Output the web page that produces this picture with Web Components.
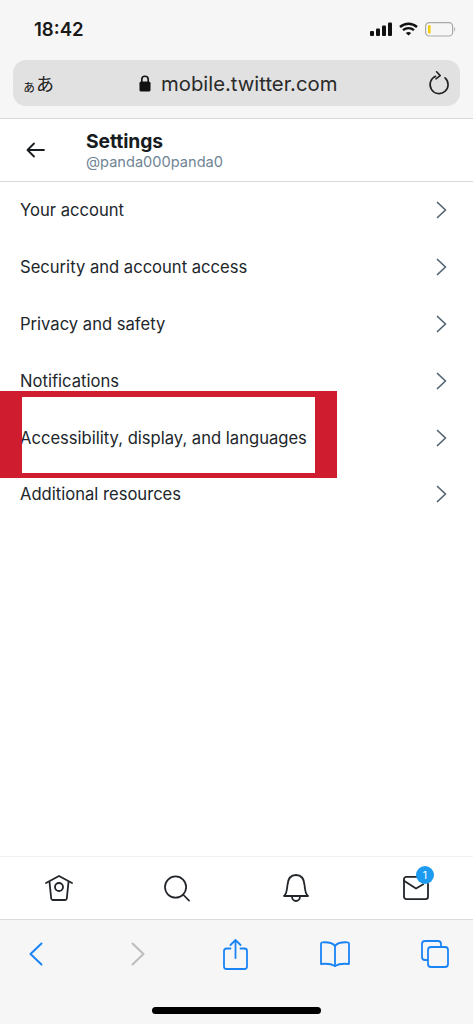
<!DOCTYPE html>
<html>
<head>
<meta charset="utf-8">
<title>Settings</title>
<style>
  html, body { margin: 0; padding: 0; background: #fff; }
  body { font-family: Inter, "Noto Sans CJK JP", sans-serif; }
  #page { width: 473px; height: 1024px; display: flex; flex-direction: column; overflow: hidden; }
  #list { flex: 1; }
</style>
</head>
<body>
<div id="page">
  <browser-top url="mobile.twitter.com"></browser-top>
  <settings-header title="Settings" handle="@panda000panda0"></settings-header>
  <div id="list">
    <settings-row>Your account</settings-row>
    <settings-row>Security and account access</settings-row>
    <settings-row>Privacy and safety</settings-row>
    <settings-row>Notifications</settings-row>
    <settings-row marked>Accessibility, display, and languages</settings-row>
    <settings-row>Additional resources</settings-row>
  </div>
  <tab-bar></tab-bar>
  <browser-bottom></browser-bottom>
</div>

<script>
/* BARRA DO NAVEGADOR */
class BrowserTop extends HTMLElement {
  connectedCallback() {
    this.attachShadow({ mode: "open" });
    this.shadowRoot.innerHTML = `
      <style>
        :host { display: block; height: 118px; background: #f6f6f6; border-bottom: 1px solid #d9d9d9; }
        .status { height: 60px; display: flex; align-items: center; justify-content: space-between; padding: 0 17px 2px 34px; box-sizing: border-box; }
        .time { font-size: 18.6px; font-weight: 600; color: #1a1a1a; }
        .icons { display: flex; align-items: center; gap: 7px; }
        svg { display: block; }
        .url { margin: 0 13px; height: 46px; border-radius: 13px; background: #e1e1e1; display: flex; align-items: center; padding: 0 11px 0 9px; }
        .aa { font-size: 18px; color: #222; font-family: "Noto Sans CJK JP", sans-serif; width: 117px; white-space: nowrap; }
        .aa small { font-size: 14px; }
        .addr { flex: 1; display: flex; align-items: center; gap: 10px; font-size: 20.3px; color: #2a2a2a; }
      </style>
      <div class="status">
        <span class="time">18:42</span>
        <span class="icons">
          <svg width="22" height="14" viewBox="0 0 22 14" fill="#111">
            <rect x="0" y="9" width="4" height="5" rx="1"/><rect x="6" y="6.5" width="4" height="7.5" rx="1"/>
            <rect x="12" y="3.5" width="4" height="10.5" rx="1"/><rect x="18" y="0.5" width="4" height="13.5" rx="1"/>
          </svg>
          <svg width="19" height="14" viewBox="0 0 19 14" fill="none" stroke="#111" stroke-width="2.4">
            <path d="M1 5 C6 0.6 13 0.6 18 5"/><path d="M4 8.2 C7.2 5.4 11.8 5.4 15 8.2"/>
            <path d="M9.5 13.6 L6.8 10.9 C8.4 9.7 10.6 9.7 12.2 10.9 Z" fill="#111" stroke="none"/>
          </svg>
          <svg width="31" height="15" viewBox="0 0 31 15">
            <rect x="0.6" y="0.6" width="27" height="13.4" rx="3.6" fill="none" stroke="#a9a9a9" stroke-width="1.2"/>
            <rect x="3" y="3" width="2.6" height="8.6" rx="1" fill="#f6ce0e"/>
            <path d="M29.2 5 C30.4 5.5 30.4 9.1 29.2 9.6 Z" fill="#a9a9a9"/>
          </svg>
        </span>
      </div>
      <div class="url">
        <span class="aa"><small>ぁ</small>あ</span>
        <span class="addr">
          <svg width="12" height="17" viewBox="0 0 12 17"><path d="M2.8 7V4.4a3.2 3.2 0 0 1 6.4 0V7" fill="none" stroke="#111" stroke-width="1.6"/><rect x="0.5" y="6.6" width="11" height="10" rx="1.6" fill="#111"/></svg>
          <span>${this.getAttribute("url")}</span>
        </span>
        <svg width="21" height="24" viewBox="0 0 21 24" fill="none" stroke="#222" stroke-width="1.6" stroke-linecap="round" stroke-linejoin="round">
          <path d="M7.6 5.3 A9 9 0 1 0 17 6.8"/><path d="M8.6 0.8 L12.2 4.6 L8 7.8"/>
        </svg>
      </div>`;
  }
}
customElements.define("browser-top", BrowserTop);

/* CABECALHO */
class SettingsHeader extends HTMLElement {
  connectedCallback() {
    this.attachShadow({ mode: "open" });
    this.shadowRoot.innerHTML = `
      <style>
        :host { display: flex; align-items: center; height: 62px; background: #fff; border-bottom: 1px solid #d5dadd; }
        .back { width: 86px; padding-left: 26px; box-sizing: border-box; }
        svg { display: block; }
        .title { font-size: 19.3px; font-weight: 700; color: #171c21; line-height: 24px; letter-spacing: -0.1px; }
        .handle { font-size: 14.6px; color: #6f8494; line-height: 19px; }
      </style>
      <div class="back">
        <svg width="19" height="16" viewBox="0 0 19 16" fill="none" stroke="#171c21" stroke-width="1.8" stroke-linecap="round" stroke-linejoin="round">
          <path d="M18 8H1.500M8 1.500L1.500 8L8 14.500"/>
        </svg>
      </div>
      <div>
        <div class="title">${this.getAttribute("title")}</div>
        <div class="handle">${this.getAttribute("handle")}</div>
      </div>`;
  }
}
customElements.define("settings-header", SettingsHeader);

/* LINHAS */
class SettingsRow extends HTMLElement {
  connectedCallback() {
    this.attachShadow({ mode: "open" });
    const mark = this.hasAttribute("marked") ? `<div class="mark"></div>` : "";
    this.shadowRoot.innerHTML = `
      <style>
        :host { display: flex; align-items: center; justify-content: space-between; height: 56.8px; padding: 0 26px 0 20px; font-size: 16.6px; color: #22272c; position: relative; }
        svg { display: block; }
        .mark { position: absolute; left: 0; top: -18px; width: 337px; height: 87px; box-sizing: border-box; border: solid #d01c2f; border-width: 6px 22px 5px 22.5px; }
      </style>
      <span><slot></slot></span>
      <svg width="11" height="18" viewBox="0 0 11 18" fill="none" stroke="#536471" stroke-width="1.7" stroke-linecap="round" stroke-linejoin="round">
        <path d="M1.500 1.500L9.500 9L1.500 16.500"/>
      </svg>
      ${mark}`;
  }
}
customElements.define("settings-row", SettingsRow);

/* ABAS */
class TabBar extends HTMLElement {
  connectedCallback() {
    this.attachShadow({ mode: "open" });
    this.shadowRoot.innerHTML = `
      <style>
        :host { display: flex; align-items: center; justify-content: space-between; height: 62px; padding: 0 44px 0 45px; background: #fff; border-top: 1px solid #f1f1f1; border-bottom: 1px solid #dcdcdc; }
        svg { display: block; overflow: visible; }
        .tab { position: relative; }
        .search { margin-left: -3px; }
        .badge { position: absolute; top: -10px; right: -5px; width: 18px; height: 18px; border-radius: 50%; background: #1d9bf0; color: #fff; font-size: 10.5px; display: flex; align-items: center; justify-content: center; }
      </style>
      <svg class="tab" width="28" height="28" viewBox="0 0 28 28" fill="none" stroke="#22262a" stroke-width="1.8" stroke-linecap="round" stroke-linejoin="round">
        <path d="M1 9L14 2L27 9"/><path d="M4.500 8L6.200 24.500C6.300 25.400 7 26 7.900 26H20.100C21 26 21.700 25.400 21.800 24.500L23.500 8"/><circle cx="14" cy="13" r="4"/>
      </svg>
      <svg class="tab search" width="26" height="27" viewBox="0 0 27 27" fill="none" stroke="#22262a" stroke-width="1.8" stroke-linecap="round">
        <circle cx="12" cy="12" r="11"/><path d="M20 20L26 26"/>
      </svg>
      <svg class="tab" width="26" height="28" viewBox="0 0 26 28" fill="none" stroke="#22262a" stroke-width="1.8" stroke-linecap="round" stroke-linejoin="round">
        <path d="M1 22H25C22.500 20 22 17 21.600 11.500C21.200 5 18 1 13 1C8 1 4.800 5 4.400 11.500C4 17 3.500 20 1 22Z"/><path d="M9 22.500C9 25 10.800 27 13 27C15.200 27 17 25 17 22.500"/>
      </svg>
      <div class="tab">
        <svg width="26" height="24" viewBox="0 0 27 25" fill="none" stroke="#22262a" stroke-width="1.9" stroke-linecap="round" stroke-linejoin="round">
          <path d="M26 8V21.500C26 23 25 24 23.500 24H3.500C2 24 1 23 1 21.500V3.500C1 2 2 1 3.500 1H18"/><path d="M1 5L13.500 13L21 8.500"/>
        </svg>
        <span class="badge">1</span>
      </div>`;
  }
}
customElements.define("tab-bar", TabBar);

/* BARRA INFERIOR */
class BrowserBottom extends HTMLElement {
  connectedCallback() {
    this.attachShadow({ mode: "open" });
    this.shadowRoot.innerHTML = `
      <style>
        :host { display: block; height: 104px; background: #f6f6f6; }
        .tools { display: grid; grid-template-columns: repeat(5, 99.750px); justify-items: center; align-items: center; height: 68px; margin-left: -14px; }
        svg { display: block; }
        .fwd { margin-left: 5px; }
        .home { width: 169px; height: 7px; border-radius: 4px; background: #000; margin: 19px auto 0; }
      </style>
      <div class="tools">
        <svg width="14" height="24" viewBox="0 0 14 24" fill="none" stroke="#1a84f5" stroke-width="2" stroke-linecap="round" stroke-linejoin="round"><path d="M12.500 1.500L1.500 12L12.500 22.500"/></svg>
        <svg class="fwd" width="14" height="24" viewBox="0 0 14 24" fill="none" stroke="#bdbdbd" stroke-width="2" stroke-linecap="round" stroke-linejoin="round"><path d="M1.500 1.500L12.500 12L1.500 22.500"/></svg>
        <svg width="25" height="31" viewBox="0 0 25 31" fill="none" stroke="#1a84f5" stroke-width="1.800" stroke-linecap="round" stroke-linejoin="round"><path d="M7.500 9.500H3.500C2 9.500 1 10.500 1 12V27.500C1 29 2 30 3.500 30H21.500C23 30 24 29 24 27.500V12C24 10.500 23 9.500 21.500 9.500H17.500"/><path d="M12.500 19V1.500M7.500 6L12.500 1L17.500 6"/></svg>
        <svg width="30" height="26" viewBox="0 0 30 26" fill="none" stroke="#1a84f5" stroke-width="1.800" stroke-linecap="round" stroke-linejoin="round"><path d="M15 5C13 2 9 1 2.500 1.300C1.500 1.300 1 2 1 3V23C5.500 22.500 11 22.500 15 25C19 22.500 24.500 22.500 29 23V3C29 2 28.500 1.300 27.500 1.300C21 1 17 2 15 5Z"/><path d="M15 5V25"/></svg>
        <svg width="28" height="28" viewBox="0 0 28 28" fill="none" stroke="#1a84f5" stroke-width="1.800" stroke-linejoin="round"><path d="M7 20H4C2.300 20 1 18.700 1 17V4C1 2.300 2.300 1 4 1H17C18.700 1 20 2.300 20 4V7"/><rect x="7" y="7" width="20" height="20" rx="3"/></svg>
      </div>
      <div class="home"></div>`;
  }
}
customElements.define("browser-bottom", BrowserBottom);
</script>
</body>
</html>
